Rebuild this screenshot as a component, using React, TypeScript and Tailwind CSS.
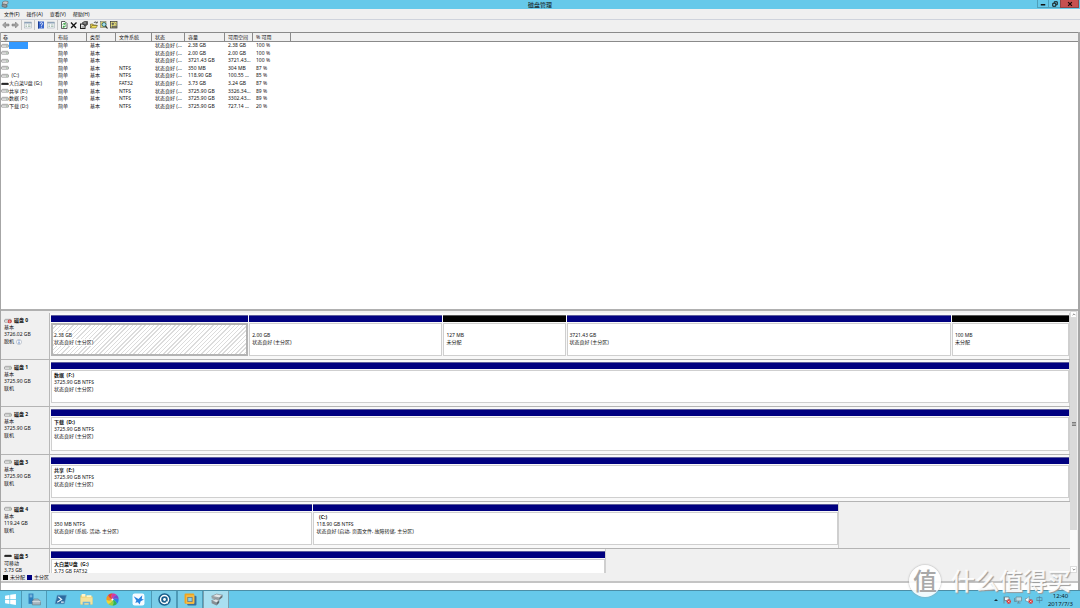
import React from "react";

type Volume = {
  name: string;
  fs: string;
  size: string;
  free: string;
  pct: string;
  removable?: boolean;
  selected?: boolean;
};

type Partition = {
  title: string;
  size: string;
  state: string;
  weight: number;
  unallocated?: boolean;
  selected?: boolean;
};

type Disk = {
  name: string;
  kind: string;
  size: string;
  status: string;
  share: number;
  icon: "disk" | "offline" | "removable";
  partitions: Partition[];
};

const volumes: Volume[] = [
  { name: "", fs: "", size: "2.38 GB", free: "2.38 GB", pct: "100 %", selected: true },
  { name: "", fs: "", size: "2.00 GB", free: "2.00 GB", pct: "100 %" },
  { name: "", fs: "", size: "3721.43 GB", free: "3721.43...", pct: "100 %" },
  { name: "", fs: "NTFS", size: "350 MB", free: "304 MB", pct: "87 %" },
  { name: "  (C:)", fs: "NTFS", size: "118.90 GB", free: "100.55 ...", pct: "85 %" },
  { name: "大白菜U盘 (G:)", fs: "FAT32", size: "3.73 GB", free: "3.24 GB", pct: "87 %", removable: true },
  { name: "共享 (E:)", fs: "NTFS", size: "3725.90 GB", free: "3326.34...", pct: "89 %" },
  { name: "数据 (F:)", fs: "NTFS", size: "3725.90 GB", free: "3302.43...", pct: "89 %" },
  { name: "下载 (D:)", fs: "NTFS", size: "3725.90 GB", free: "727.14 ...", pct: "20 %" },
];

const healthy = "状态良好 (主分区)";

const disks: Disk[] = [
  {
    name: "磁盘 0", kind: "基本", size: "3726.02 GB", status: "脱机", share: 100, icon: "offline",
    partitions: [
      { title: "", size: "2.38 GB", state: healthy, weight: 197, selected: true },
      { title: "", size: "2.00 GB", state: healthy, weight: 193 },
      { title: "", size: "127 MB", state: "未分配", weight: 122, unallocated: true },
      { title: "", size: "3721.43 GB", state: healthy, weight: 384 },
      { title: "", size: "100 MB", state: "未分配", weight: 117, unallocated: true },
    ],
  },
  {
    name: "磁盘 1", kind: "基本", size: "3725.90 GB", status: "联机", share: 100, icon: "disk",
    partitions: [{ title: "数据  (F:)", size: "3725.90 GB NTFS", state: healthy, weight: 1 }],
  },
  {
    name: "磁盘 2", kind: "基本", size: "3725.90 GB", status: "联机", share: 100, icon: "disk",
    partitions: [{ title: "下载  (D:)", size: "3725.90 GB NTFS", state: healthy, weight: 1 }],
  },
  {
    name: "磁盘 3", kind: "基本", size: "3725.90 GB", status: "联机", share: 100, icon: "disk",
    partitions: [{ title: "共享  (E:)", size: "3725.90 GB NTFS", state: healthy, weight: 1 }],
  },
  {
    name: "磁盘 4", kind: "基本", size: "119.24 GB", status: "联机", share: 77.4, icon: "disk",
    partitions: [
      { title: "", size: "350 MB NTFS", state: "状态良好 (系统, 活动, 主分区)", weight: 261 },
      { title: "  (C:)", size: "118.90 GB NTFS", state: "状态良好 (启动, 页面文件, 故障转储, 主分区)", weight: 524 },
    ],
  },
  {
    name: "磁盘 5", kind: "可移动", size: "3.73 GB", status: "联机", share: 54.5, icon: "removable",
    partitions: [{ title: "大白菜U盘  (G:)", size: "3.73 GB FAT32", state: healthy, weight: 1 }],
  },
];

function DriveIcon({ kind }: { kind: "disk" | "offline" | "removable" }) {
  if (kind === "removable") {
    return (
      <svg viewBox="0 0 8 6" className="h-[6px] w-[8px] shrink-0">
        <path d="M1 1.8h6l.6 1.6H.4z" fill="#555" />
        <rect x=".4" y="2.2" width="7.2" height="1.6" fill="#1c1c1c" />
      </svg>
    );
  }
  return (
    <svg viewBox="0 0 8 6" className="h-[6px] w-[8px] shrink-0">
      <path d="M1.6 1h4.8l1.2 1.2H.4z" fill="#dcdcdc" stroke="#aaa" strokeWidth=".4" />
      <rect x=".5" y="2" width="7" height="2.2" rx=".5" fill="#f2f2f2" stroke="#777" strokeWidth=".6" />
      <rect x="5.2" y="2.7" width="1.4" height=".8" fill="#7aa57a" />
      {kind === "offline" && (
        <>
          <circle cx="5.7" cy="3.4" r="1.9" fill="#d23b3b" />
          <path d="M5.7 2.2v2M4.9 3.6l.8.8.8-.8" stroke="#fff" strokeWidth=".5" fill="none" />
        </>
      )}
    </svg>
  );
}

function ToolButton({ label, children }: { label: string; children: React.ReactNode }) {
  return (
    <button type="button" aria-label={label} className="flex h-[10px] w-[8px] items-center justify-center">
      <svg viewBox="0 0 16 16" className="h-[8px] w-[8px]">{children}</svg>
    </button>
  );
}

function Divider() {
  return <span className="h-[10px] w-px bg-[#c4c4c4]" />;
}

function PaneGlyph() {
  return (
    <>
      <rect x="1" y="2" width="14" height="12" fill="#f4f6f8" stroke="#9aa5b0" />
      <rect x="1" y="2" width="14" height="3" fill="#8fa3b8" />
      <path d="M3 8h3M3 11h3M8 8h5M8 11h5" stroke="#8fae9b" strokeWidth="1.4" />
    </>
  );
}

function Toolbar() {
  return (
    <div className="flex h-[12px] items-start pl-[2px]">
      <div className="flex gap-[1px]">
        <ToolButton label="后退"><path d="M1 8l6-6v4h7v4H7v4z" fill="#a4a4a4" stroke="#707070" /></ToolButton>
        <ToolButton label="前进"><path d="M15 8L9 2v4H2v4h7v4z" fill="#a4a4a4" stroke="#707070" /></ToolButton>
      </div>
      <div className="flex items-center gap-[2px] pl-[2px]">
        <Divider />
        <ToolButton label="显示/隐藏"><PaneGlyph /></ToolButton>
        <Divider />
      </div>
      <div className="flex items-center gap-[2px] pl-[2px]">
        <ToolButton label="帮助">
          <rect x="2" y="1" width="12" height="14" fill="#3a66cc" />
          <rect x="2" y="1" width="2" height="14" fill="#1d3f92" />
          <path d="M6.5 5.5c0-3 4.6-2.9 4.6 0 0 1.8-2.3 2-2.3 4.2M8.8 11.4v1.8" stroke="#fff" strokeWidth="1.7" fill="none" />
        </ToolButton>
        <ToolButton label="列表"><PaneGlyph /></ToolButton>
        <Divider />
      </div>
      <div className="flex items-center gap-[2px] pl-[2px]">
        <ToolButton label="刷新">
          <path d="M3 1h7l4 4v10H3z" fill="#fff" stroke="#222" strokeWidth="1.4" />
          <path d="M5.5 7a3 3 0 0 1 5-1M11.5 9a3 3 0 0 1-5 2M10.5 3v3.5H7.5M6.5 14v-3.5h3" stroke="#2c9a36" strokeWidth="1.8" fill="none" />
        </ToolButton>
        <ToolButton label="删除"><path d="M2 3l10 11M13 3L2 14" stroke="#111" strokeWidth="2.6" /></ToolButton>
        <ToolButton label="属性">
          <rect x="1" y="6" width="9" height="9" fill="#eee" stroke="#222" strokeWidth="2" />
          <path d="M5 3l4-2h6v6l-4 3-5-3z" fill="#555" stroke="#111" />
          <path d="M7 4h5" stroke="#ddd" strokeWidth="1.3" />
          <path d="M3 12h5" stroke="#444" strokeWidth="1.4" />
        </ToolButton>
        <ToolButton label="打开">
          <path d="M1 14V6h5l1 2h6v2" fill="#ead25a" stroke="#4a4218" />
          <path d="M1 14l3-5h11l-3 5z" fill="#f5e15c" stroke="#4a4218" />
          <path d="M8 4c1-3 4-3 5 0M11.5 4h3v-3" stroke="#222" strokeWidth="1.4" fill="none" />
        </ToolButton>
        <ToolButton label="查找">
          <rect x="1" y="1" width="11" height="12" fill="#d9cf69" stroke="#666" />
          <circle cx="8" cy="7" r="4" fill="#a7e2ee" stroke="#1e5663" strokeWidth="1.6" />
          <path d="M11 10l4 5" stroke="#222" strokeWidth="2.4" />
        </ToolButton>
        <ToolButton label="设置">
          <rect x="1" y="1" width="13" height="13" fill="#e3dc7d" stroke="#333" strokeWidth="1.4" />
          <path d="M4 4h3v3H4zM4 10h3v3H4zM9 3l3 4M9 10h4v3H9z" fill="#777" stroke="#444" />
        </ToolButton>
      </div>
    </div>
  );
}

function VolumeTable() {
  const head = ["布局", "类型", "文件系统", "状态", "容量", "可用空间", "% 可用"];
  return (
    <table className="h-[77px] w-full table-fixed border-separate border-spacing-0 text-left">
      <colgroup>
        <col className="w-[54px]" />
        <col className="w-[32px]" />
        <col className="w-[29px]" />
        <col className="w-[36px]" />
        <col className="w-[33px]" />
        <col className="w-[40px]" />
        <col className="w-[28px]" />
        <col className="w-[38px]" />
        <col />
      </colgroup>
      <thead>
        <tr className="h-[9px] bg-[#f0f0f0]">
          <th className="border-r border-b border-[#8a8a8a] p-0 pl-[2px] font-normal">卷</th>
          {head.map((h) => (
            <th key={h} className="border-r border-b border-[#8a8a8a] p-0 pl-[3px] font-normal whitespace-nowrap">{h}</th>
          ))}
          <th className="border-b border-[#8a8a8a] p-0" />
        </tr>
      </thead>
      <tbody>
        {volumes.map((v, i) => (
          <tr key={i} className="whitespace-nowrap">
            <td className="p-0">
              <div className="flex items-center">
                <DriveIcon kind={v.removable ? "removable" : "disk"} />
                <span className={v.selected ? "h-[7px] w-[19px] bg-[#3399ff]" : "whitespace-pre"}>{v.name}</span>
              </div>
            </td>
            <td className="p-0 pl-[3px]">简单</td>
            <td className="p-0 pl-[3px]">基本</td>
            <td className="p-0 pl-[3px]">{v.fs}</td>
            <td className="p-0 pl-[3px]">状态良好 (...</td>
            <td className="p-0 pl-[3px]">{v.size}</td>
            <td className="p-0 pl-[3px]">{v.free}</td>
            <td className="p-0 pl-[3px]">{v.pct}</td>
            <td className="p-0" />
          </tr>
        ))}
      </tbody>
    </table>
  );
}

function PartitionBox({ p }: { p: Partition }) {
  return (
    <div className="flex min-w-0 basis-0 flex-col" style={{ flexGrow: p.weight }}>
      <div className={p.unallocated ? "h-[7px] border-t border-[#555] bg-black" : "h-[7px] border-t border-[#5c5c9c] bg-[#000080]"} />
      <div
        className={
          p.selected
            ? "mt-px flex-1 border-2 border-[#b4b4b4] bg-[repeating-linear-gradient(135deg,#fff_0px,#fff_2px,#dcdcdc_2px,#dcdcdc_3px)] pl-px"
            : "mt-px flex-1 border border-[#cfcfcf] bg-white pt-px pl-[2px]"
        }
      >
        <div className="h-[7px] font-bold whitespace-pre">{p.title}</div>
        <div className="whitespace-nowrap"><span className={p.selected ? "inline-block bg-white" : ""}>{p.size}</span></div>
        <div className="whitespace-nowrap"><span className={p.selected ? "inline-block bg-white" : ""}>{p.state}</span></div>
      </div>
    </div>
  );
}

function DiskRow({ d }: { d: Disk }) {
  return (
    <div className="flex min-h-0 border-b border-[#b4b4b4]">
      <div className="w-[49px] shrink-0 border-r border-[#b8b8b8] pt-[4px] pl-[3px]">
        <div className="flex items-center gap-[2px] font-bold">
          <DriveIcon kind={d.icon} />
          {d.name}
        </div>
        <div>{d.kind}</div>
        <div>{d.size}</div>
        <div className="flex items-center gap-[2px]">
          {d.status}
          {d.icon === "offline" && (
            <svg viewBox="0 0 12 12" className="h-[6px] w-[6px]">
              <circle cx="6" cy="6" r="5" fill="#fff" stroke="#8a96a8" />
              <path d="M6 2.5v1.6M6 5.2V9.6" stroke="#2d62b8" strokeWidth="1.7" />
            </svg>
          )}
        </div>
      </div>
      <div className="min-w-0 flex-1 bg-[#f0f0f0]">
        <div className="flex h-full border-r border-[#cfcfcf] bg-[#f8f8f8] pt-[2px] pb-[3px] pl-px" style={{ width: `${d.share}%` }}>
          <div className="flex min-w-0 flex-1 gap-px">
            {d.partitions.map((p, i) => <PartitionBox key={i} p={p} />)}
          </div>
        </div>
      </div>
    </div>
  );
}

function ScrollBar() {
  return (
    <div className="flex w-[7px] flex-col bg-[#fafafa]">
      <button type="button" aria-label="向上滚动" className="flex h-[7px] items-center justify-center border border-[#dcdcdc] bg-white">
        <svg viewBox="0 0 6 4" className="h-[3px] w-[4px]"><path d="M1 3l2-2 2 2" fill="none" stroke="#555" /></svg>
      </button>
      <div className="flex h-[212px] items-center justify-center bg-[#dadada]">
        <svg viewBox="0 0 4 4" className="h-[4px] w-[4px]"><path d="M0 .5h4M0 2h4M0 3.5h4" stroke="#666" strokeWidth=".8" /></svg>
      </div>
      <div className="flex-1" />
      <button type="button" aria-label="向下滚动" className="flex h-[7px] items-center justify-center border border-[#dcdcdc] bg-white">
        <svg viewBox="0 0 6 4" className="h-[3px] w-[4px]"><path d="M1 1l2 2 2-2" fill="none" stroke="#555" /></svg>
      </button>
    </div>
  );
}

function TaskButton({ label, state, children }: { label: string; state?: "open" | "active"; children: React.ReactNode }) {
  const look =
    state === "active"
      ? "border-x border-[#7a9fae] bg-[#a9dff0]"
      : state === "open"
        ? "border-x border-[#4d9ab6] bg-[#79cde8]"
        : "border-x border-transparent";
  return (
    <button type="button" aria-label={label} className={`flex h-full w-[26px] items-center justify-center ${look}`}>
      <svg viewBox="0 0 24 24" className="h-[13px] w-[13px]">{children}</svg>
    </button>
  );
}

function Taskbar() {
  const wheel = ["#2d7fe6", "#2fb457", "#9bd13c", "#f5d52e", "#f7941d", "#ef3e36", "#d936a0", "#7b46d0"];
  const point = (r: number, angle: number) => `${(12 + r * Math.cos(angle)).toFixed(2)} ${(12 + r * Math.sin(angle)).toFixed(2)}`;
  return (
    <div className="flex h-[18px] items-stretch border-t border-[#4b8ea6] bg-[#66c9ea]">
      <button type="button" aria-label="开始" className="flex w-[21px] items-center justify-center">
        <svg viewBox="0 0 24 24" className="h-[13px] w-[13px]">
          <path d="M2 5l8-1.4v7.6H2zM11.4 3.4L22 2v9.2H11.4zM2 12.6h8v7.8L2 19zM11.4 12.6H22V22l-10.6-1.5z" fill="#fff" />
        </svg>
      </button>
      <TaskButton label="服务器管理器" state="open">
        <rect x="1" y="1" width="9" height="19" fill="#2d7fbd" />
        <path d="M3 4h5M3 7h5" stroke="#b9e0f5" strokeWidth="1.4" />
        <path d="M8 15l3-4h8l4 4v7H8z" fill="#a5b4bd" stroke="#5f717c" />
        <path d="M8 16h15" stroke="#e9eef1" strokeWidth="1.4" />
      </TaskButton>
      <TaskButton label="PowerShell">
        <path d="M6 4h17l-4 16H2z" fill="#2d6a9f" stroke="#5f9cc4" />
        <path d="M8 7l6 5-8 5M13 17h5" stroke="#e6f3fb" strokeWidth="2.2" fill="none" />
      </TaskButton>
      <TaskButton label="文件资源管理器">
        <path d="M1 4h8l2 2h12v15H1z" fill="#e6c55f" />
        <path d="M3 2h7v5H3zM12 4h9v4h-9z" fill="#fff4c7" />
        <path d="M1 8h22v13H1z" fill="#f6e29a" />
        <path d="M5 22v-6h14v6h-3v-3H8v3z" fill="#6eb5dc" />
      </TaskButton>
      <TaskButton label="相册">
        {wheel.map((c, i) => {
          const a = (i * Math.PI) / 4;
          const b = a + Math.PI / 4;
          return (
            <path
              key={c}
              fill={c}
              d={`M12 12Q${point(7, a - 0.5)} ${point(11.5, a)}A11.5 11.5 0 0 1 ${point(11.5, b)}Q${point(7, b - 0.5)} 12 12Z`}
            />
          );
        })}
        <circle cx="12" cy="12" r="2" fill="#fff" />
      </TaskButton>
      <TaskButton label="迅雷">
        <rect x="1" y="1" width="22" height="22" rx="4" fill="#f7fbff" />
        <path d="M3 6l9 5 7-7-1 7 4 1-6 3-2 6-3-4-5 1 2-4z" fill="#2b83df" />
      </TaskButton>
      <TaskButton label="浏览器" state="open">
        <circle cx="12" cy="12" r="11.5" fill="#1b5f8c" />
        <circle cx="12" cy="12" r="7.4" fill="none" stroke="#fff" strokeWidth="2.6" />
        <circle cx="12" cy="12" r="2.6" fill="#fff" />
        <path d="M15 16l3 3" stroke="#fff" strokeWidth="2.4" />
      </TaskButton>
      <TaskButton label="虚拟机" state="open">
        <rect x="6" y="5" width="17" height="18" rx="2" fill="#366f9d" />
        <rect x="1" y="1" width="18" height="19" rx="2" fill="#f0a51f" />
        <rect x="4" y="4" width="15" height="16" rx="1" fill="#f7bd45" />
        <rect x="7" y="8" width="8" height="8" fill="#86d2ec" stroke="#66707a" strokeWidth="1.4" />
      </TaskButton>
      <TaskButton label="磁盘管理" state="active">
        <path d="M3 6l9-4 11 2-6 5z" fill="#e4e6e8" stroke="#6d7479" />
        <path d="M3 6l14 3v4L3 10z" fill="#9aa0a4" />
        <path d="M17 9l6-5v4l-6 5z" fill="#666d72" />
        <path d="M3 14l8-3 6 3-5 4z" fill="#e0e2e4" stroke="#6d7479" />
        <path d="M3 14l9 4v5l-9-4z" fill="#868d92" />
        <path d="M12 18l5-4v4l-5 5z" fill="#5b6368" />
      </TaskButton>
      <div className="ml-auto flex items-center gap-[3px] pr-[7px]">
        <svg viewBox="0 0 8 8" className="h-[4px] w-[4px]"><path d="M0 6l4-4 4 4z" fill="#17313b" /></svg>
        <svg viewBox="0 0 16 16" className="ml-[2px] h-[8px] w-[8px]">
          <path d="M2 1v14M3 2h9v7H3z" fill="#e9f3f6" stroke="#62737a" strokeWidth="1.4" />
          <circle cx="11.5" cy="11" r="4.5" fill="#d63232" /><path d="M9.5 9l4 4M13.5 9l-4 4" stroke="#fff" strokeWidth="1.3" />
        </svg>
        <svg viewBox="0 0 16 16" className="h-[8px] w-[8px]">
          <path d="M4 2h11v8H4z" fill="#bcd9e4" stroke="#6b8791" strokeWidth="1.4" /><path d="M1 4v7h4M9 10v4M6 14h7" stroke="#6b8791" strokeWidth="1.6" fill="none" />
        </svg>
        <svg viewBox="0 0 16 16" className="h-[8px] w-[8px]">
          <path d="M1 5h3l4-4v13l-4-4H1z" fill="#f2f6f8" stroke="#5f7a85" />
          <circle cx="11.5" cy="11" r="4.5" fill="#d63232" /><path d="M9.5 9l4 4M13.5 9l-4 4" stroke="#fff" strokeWidth="1.3" />
        </svg>
        <span className="text-[7px] leading-[9px] text-[#4f7686]">中</span>
        <div className="pl-[2px] text-center text-[6px] leading-[8px] text-[#0c222b]">
          <div>12:40</div>
          <div>2017/7/3</div>
        </div>
      </div>
    </div>
  );
}

export default function App() {
  return (
    <div className="relative flex min-h-screen flex-col overflow-hidden bg-[#f0f0f0] font-['Noto_Sans','Noto_Sans_CJK_SC',sans-serif] text-[5px] leading-[7px] text-[#111]">
      <header className="flex h-[9px] items-start bg-[#66c9ea]">
        <div className="flex flex-1 items-center pl-px">
          <svg viewBox="0 0 16 16" className="h-[8px] w-[8px]">
            <path d="M3 4l5-2 6 1v4l-5 3-6-2z" fill="#c6c9cb" stroke="#555" />
            <path d="M2 9l5-1 5 2v4l-4 1-6-2z" fill="#8e9498" stroke="#4c4c4c" />
          </svg>
        </div>
        <h1 className="text-[6px] leading-[10px]">磁盘管理</h1>
        <div className="flex flex-1 justify-end pr-px">
          <button type="button" aria-label="最小化" className="flex h-[8px] w-[12px] items-center justify-center border border-t-0 border-[#4f9fba]">
            <svg viewBox="0 0 8 8" className="h-[6px] w-[6px]"><path d="M1 5h6" stroke="#111" strokeWidth="2" /></svg>
          </button>
          <button type="button" aria-label="还原" className="flex h-[8px] w-[11px] items-center justify-center border-b border-[#4f9fba]">
            <svg viewBox="0 0 8 8" className="h-[6px] w-[6px]"><path d="M3 2.5V1h4v4H5.5M1 3h4v4H1z" fill="none" stroke="#111" strokeWidth="1.3" /></svg>
          </button>
          <button type="button" aria-label="关闭" className="flex h-[8px] w-[19px] items-center justify-center border border-t-0 border-[#8f4444] bg-[#c75050]">
            <svg viewBox="0 0 8 8" className="h-[6px] w-[6px]"><path d="M1.5 1.5l5 5M6.5 1.5l-5 5" stroke="#1c0808" strokeWidth="1.7" /></svg>
          </button>
        </div>
      </header>

      <nav className="flex h-[11px] items-center gap-[7px] border-b border-[#cfd3dc] pl-[4px]">
        {["文件(F)", "操作(A)", "查看(V)", "帮助(H)"].map((m) => (
          <button key={m} type="button">{m}</button>
        ))}
      </nav>
      <Toolbar />

      <main className="flex flex-1 flex-col border-r-2 border-l border-[#a6a6a6]">
        <section className="flex-1 border-t border-b-2 border-t-[#8a8a8a] border-b-[#b0b0b0] bg-white">
          <VolumeTable />
        </section>
        <section className="flex h-[262px] pr-px">
          <div className="min-w-0 flex-1 overflow-hidden pt-[2px]">
            <div className="grid h-[283px] auto-rows-fr">
              {disks.map((d) => <DiskRow key={d.name} d={d} />)}
            </div>
          </div>
          <ScrollBar />
        </section>
        <footer className="flex h-[10px] items-center gap-[2px] border-b-2 border-[#c4c4c4] pl-[2px]">
          <span className="h-[5px] w-[5px] bg-black" />
          <span>未分配</span>
          <span className="h-[5px] w-[5px] bg-[#000080]" />
          <span>主分区</span>
        </footer>
        <div className="h-[7px] bg-white" />
      </main>
      <Taskbar />

      <div className="pointer-events-none absolute right-[9px] bottom-[11px] flex items-center gap-[10px]">
        <span className="flex h-[32px] w-[32px] items-center justify-center rounded-full bg-white/90 text-[24px] leading-[32px] font-medium text-[#a8a8a8] shadow-[0_0_2px_#999]">值</span>
        <span className="text-[24px] leading-[32px] font-medium text-white/90 [text-shadow:1px_1px_1px_#999]">什么值得买</span>
      </div>
    </div>
  );
}
